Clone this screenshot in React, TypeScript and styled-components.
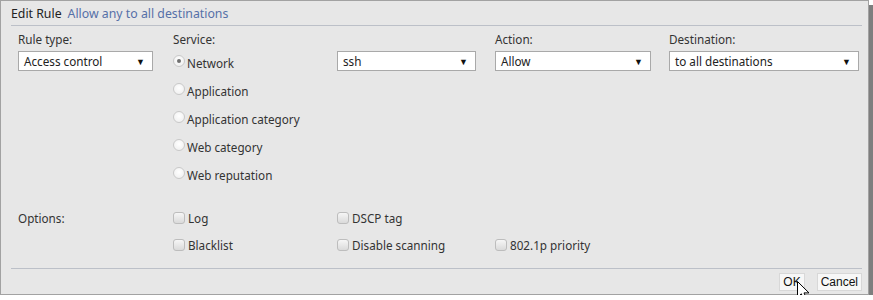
import styled, { createGlobalStyle } from 'styled-components';

const GlobalStyle = createGlobalStyle`
	body {
		margin: 0;
		background: #ffffff;
		font-family: 'Noto Sans', 'Liberation Sans', sans-serif;
	}
`;

type Option = { label: string; checked?: boolean };

const services: Option[] = [
	{ label: 'Network', checked: true },
	{ label: 'Application' },
	{ label: 'Application category' },
	{ label: 'Web category' },
	{ label: 'Web reputation' },
];

const Select = ({ value, width }: { value: string; width: number }) => (
	<SelectBox width={width}>
		<span>{value}</span>
		<Arrow>▼</Arrow>
	</SelectBox>
);

const Radio = ({ label, checked }: Option) => (
	<ChoiceRow>
		<RadioDot checked={!!checked} />
		{label}
	</ChoiceRow>
);

const Check = ({ label }: { label: string }) => (
	<ChoiceRow>
		<CheckBox />
		{label}
	</ChoiceRow>
);

const App = () => {
	return (
		<>
			<GlobalStyle />
			<Dialog>
				<Header>
					<Title>Edit Rule</Title>
					<RuleName>Allow any to all destinations</RuleName>
				</Header>
				<Body>
					<Label>Rule type:</Label>
					<Label>Service:</Label>
					<Label />
					<Label>Action:</Label>
					<Label>Destination:</Label>

					<div>
						<Select value='Access control' width={135} />
					</div>
					<RadioList>
						{services.map((s) => (
							<Radio key={s.label} {...s} />
						))}
					</RadioList>
					<div>
						<Select value='ssh' width={139} />
					</div>
					<div>
						<Select value='Allow' width={156} />
					</div>
					<div>
						<Select value='to all destinations' width={190} />
					</div>

					<OptionsLabel>Options:</OptionsLabel>
					<Stack>
						<Check label='Log' />
						<Check label='Blacklist' />
					</Stack>
					<Stack>
						<Check label='DSCP tag' />
						<Check label='Disable scanning' />
					</Stack>
					<Stack>
						<ChoiceRow />
						<Check label='802.1p priority' />
					</Stack>
				</Body>
				<Footer>
					<Button pad={3}>
						OK
						<Cursor width='14' height='21' viewBox='0 0 14 21'>
							<path
								d='M0.5 0.5 L0.5 16.5 L4.3 12.8 L7.2 19.5 L9.8 18.4 L7 11.9 L12 11.9 Z'
								fill='#ffffff'
								stroke='#000000'
								strokeWidth='1'
							/>
						</Cursor>
					</Button>
					<Button pad={3}>Cancel</Button>
				</Footer>
			</Dialog>
		</>
	);
};

export default App;

// Styled Components
const Dialog = styled.div`
	width: 869px;
	height: 295px;
	box-sizing: border-box;
	background: #e7e7e7;
	border: 1px solid #a2a2a2;
	box-shadow: 4px 5px 0 #7e7e7e;
	display: flex;
	flex-direction: column;
	color: #333333;
	font-size: 11.7px;
`;

const Header = styled.div`
	height: 24px;
	flex-shrink: 0;
	margin: 0 6px 0 10px;
	border-bottom: 1px solid #bcc0c8;
	display: flex;
	align-items: center;
	gap: 6px;
	font-size: 12.3px;
`;

const Title = styled.span`
	color: #222222;
`;

const RuleName = styled.span`
	color: #5670a8;
`;

const Body = styled.div`
	display: grid;
	grid-template-columns: 155px 164px 158px 174px 190px;
	grid-template-rows: 19px auto auto;
	align-content: start;
	padding: 6px 0 0 17px;
	flex: 1;
`;

const Label = styled.div`
	line-height: 14px;
`;

const SelectBox = styled.div<{ width: number }>`
	width: ${(p) => p.width}px;
	height: 20px;
	box-sizing: border-box;
	background: #ffffff;
	border: 1px solid #a9a9a9;
	display: flex;
	align-items: center;
	justify-content: space-between;
	padding: 0 7px 0 5px;
	color: #222222;
`;

const Arrow = styled.span`
	font-size: 9px;
	color: #111111;
`;

const RadioList = styled.div`
	display: flex;
	flex-direction: column;
	margin-top: -2px;
`;

const ChoiceRow = styled.div`
	height: 28px;
	display: flex;
	align-items: center;
	gap: 2px;
`;

const RadioDot = styled.span<{ checked: boolean }>`
	width: 12px;
	height: 12px;
	box-sizing: border-box;
	border-radius: 50%;
	border: 1px solid #c9c9c9;
	background: radial-gradient(circle at 50% 40%, #ffffff 0%, #ececec 100%);
	margin-top: -4px;
	display: flex;
	align-items: center;
	justify-content: center;
	&::after {
		content: '';
		width: 4px;
		height: 4px;
		border-radius: 50%;
		background: ${(p) => (p.checked ? '#707070' : 'transparent')};
	}
`;

const OptionsLabel = styled.div`
	height: 28px;
	display: flex;
	align-items: center;
	margin-top: 15px;
`;

const Stack = styled.div`
	display: flex;
	flex-direction: column;
	margin-top: 15px;
	& > div + div {
		height: 26px;
	}
`;

const CheckBox = styled.span`
	width: 12px;
	height: 12px;
	box-sizing: border-box;
	border-radius: 3px;
	border: 1px solid #bdbdbd;
	background: linear-gradient(#f6f6f6, #dadada);
	margin-right: 1px;
`;

const Footer = styled.div`
	height: 21px;
	flex-shrink: 0;
	margin: 0 6px 0 10px;
	border-top: 1px solid #bcc0c8;
	display: flex;
	justify-content: flex-end;
	align-items: flex-start;
	padding-top: 4px;
	gap: 12px;
`;

const Button = styled.div<{ pad: number }>`
	position: relative;
	height: 16px;
	padding: 0 ${(p) => p.pad}px;
	background: #f7f7f7;
	border: 1px solid #d8d8d8;
	font-family: 'Liberation Sans', Arial, sans-serif;
	font-size: 12px;
	color: #111111;
	display: flex;
	align-items: center;
`;

const Cursor = styled.svg`
	position: absolute;
	left: 17px;
	top: 7px;
`;
